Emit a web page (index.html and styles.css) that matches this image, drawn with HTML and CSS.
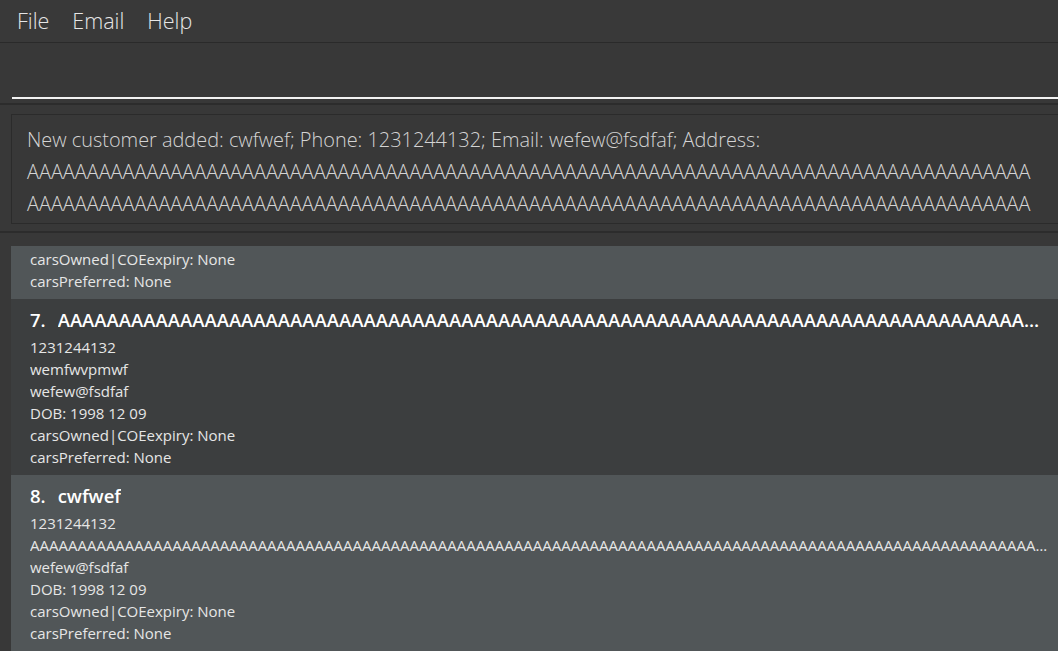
FILE: index.html
```html
<!DOCTYPE html>
<html lang="en">
<head>
<meta charset="utf-8">
<title>CarBook</title>
<link rel="stylesheet" href="styles.css">
</head>
<body>
<div class="app">
  <nav class="menubar">
    <span class="menu-item">File</span>
    <span class="menu-item">Email</span>
    <span class="menu-item">Help</span>
  </nav>

  <section class="command-pane">
    <div class="command-field"></div>
  </section>

  <section class="result-pane">
    <div class="result-box">New customer added: cwfwef; Phone: 1231244132; Email: wefew@fsdfaf; Address: AAAAAAAAAAAAAAAAAAAAAAAAAAAAAAAAAAAAAAAAAAAAAAAAAAAAAAAAAAAAAAAAAAAAAAAAAAAAAAAAAAAAAAAAAAAAAAAAAAAAAAAAAAAAAAAAAAAAAAAAAAAAAAAAAAAAAAAAAAAAAAAAAAAAAAAAAAAAAAAAAAAAAAAAAAAAAAAAAAAAAAAAAAAAAAAAAAAAAAAAAAAAAAAAAAAAAAAAAAAAAAAAAAAAAAAAAAAAAAAAAAAAAAAAAAAA; DOB: 1998 12 09</div>
  </section>

  <section class="list-pane">
    <div class="list" id="customerList">
      <article class="card odd">
        <div class="card-title"><span class="idx">6.</span><span class="name">Roy Balakrishnan</span></div>
        <div class="line">92624417</div>
        <div class="line">Blk 45 Aljunied Street 85, #11-31</div>
        <div class="line">royb@example.com</div>
        <div class="line">DOB: 1990 04 21</div>
        <div class="line">carsOwned|COEexpiry: None</div>
        <div class="line">carsPreferred: None</div>
      </article>
      <article class="card even">
        <div class="card-title"><span class="idx">7.</span><span class="name">AAAAAAAAAAAAAAAAAAAAAAAAAAAAAAAAAAAAAAAAAAAAAAAAAAAAAAAAAAAAAAAAAAAAAAAAAAAAAAAAAAAAAAAAAAAAAAAAAAAA</span></div>
        <div class="line">1231244132</div>
        <div class="line">wemfwvpmwf</div>
        <div class="line">wefew@fsdfaf</div>
        <div class="line">DOB: 1998 12 09</div>
        <div class="line">carsOwned|COEexpiry: None</div>
        <div class="line">carsPreferred: None</div>
      </article>
      <article class="card odd">
        <div class="card-title"><span class="idx">8.</span><span class="name">cwfwef</span></div>
        <div class="line">1231244132</div>
        <div class="line">AAAAAAAAAAAAAAAAAAAAAAAAAAAAAAAAAAAAAAAAAAAAAAAAAAAAAAAAAAAAAAAAAAAAAAAAAAAAAAAAAAAAAAAAAAAAAAAAAAAAAAAAAAAAAAAAAAAAAAAAAAAAAAAAAAAAAAAAAAAAAAAAAAAAA</div>
        <div class="line">wefew@fsdfaf</div>
        <div class="line">DOB: 1998 12 09</div>
        <div class="line">carsOwned|COEexpiry: None</div>
        <div class="line">carsPreferred: None</div>
      </article>
    </div>
  </section>
</div>
<script src="script.js"></script>
</body>
</html>
```

FILE: styles.css
```css
* { box-sizing: border-box; }

html, body {
  margin: 0;
  padding: 0;
  height: 100%;
  background: #383838;
  overflow: hidden;
}

.app {
  display: flex;
  flex-direction: column;
  height: 651px;
  font-family: "Open Sans", "Noto Sans", sans-serif;
}

.menubar {
  height: 43px;
  flex: none;
  display: flex;
  align-items: center;
  gap: 23px;
  padding: 0 0 2px 17px;
  background: #393939;
  border-bottom: 1px solid #2a2a2a;
}

.menu-item {
  font-size: 21.5px;
  font-weight: 300;
  color: #e6e6e6;
}

.command-pane {
  height: 62px;
  flex: none;
  padding: 0 0 0 12px;
  background: #383838;
  border-bottom: 2px solid #2c2c2c;
}

.command-field {
  height: 56px;
  border-bottom: 2px solid #f2f2f2;
}

.result-pane {
  height: 128px;
  flex: none;
  padding: 9px 0 7px 11px;
  background: #383838;
  border-bottom: 2px solid #2c2c2c;
}

.result-box {
  height: 110px;
  padding: 9px 18px 0 15px;
  border: 1px solid #2b2b2b;
  border-right: none;
  font-size: 19.9px;
  font-weight: 300;
  line-height: 32px;
  color: #d4d4d4;
  overflow-wrap: break-word;
  overflow: hidden;
}

.list-pane {
  flex: 1;
  min-height: 0;
  padding: 13px 0 0 11px;
  background: #383838;
  display: flex;
}

.list {
  flex: 1;
  min-width: 0;
  overflow: hidden;
}

.card {
  height: 176px;
  padding: 9px 4px 0 19px;
  color: #e6e6e6;
}

.card.even { background: #3c3e3f; }
.card.odd { background: #515658; }

.card-title {
  display: flex;
  gap: 12px;
  height: 23px;
  align-items: center;
  font-size: 18.5px;
  font-weight: 600;
  color: #ffffff;
  margin-bottom: 5px;
  margin-right: 6px;
  white-space: nowrap;
}

.card-title .idx { flex: none; }

.card-title .name {
  overflow: hidden;
  text-overflow: ellipsis;
  min-width: 0;
}

.line {
  font-size: 15px;
  line-height: 22px;
  white-space: nowrap;
  overflow: hidden;
  text-overflow: ellipsis;
}
```

FILE: script.js
```js
document.getElementById('customerList').scrollTop = 125;
```
